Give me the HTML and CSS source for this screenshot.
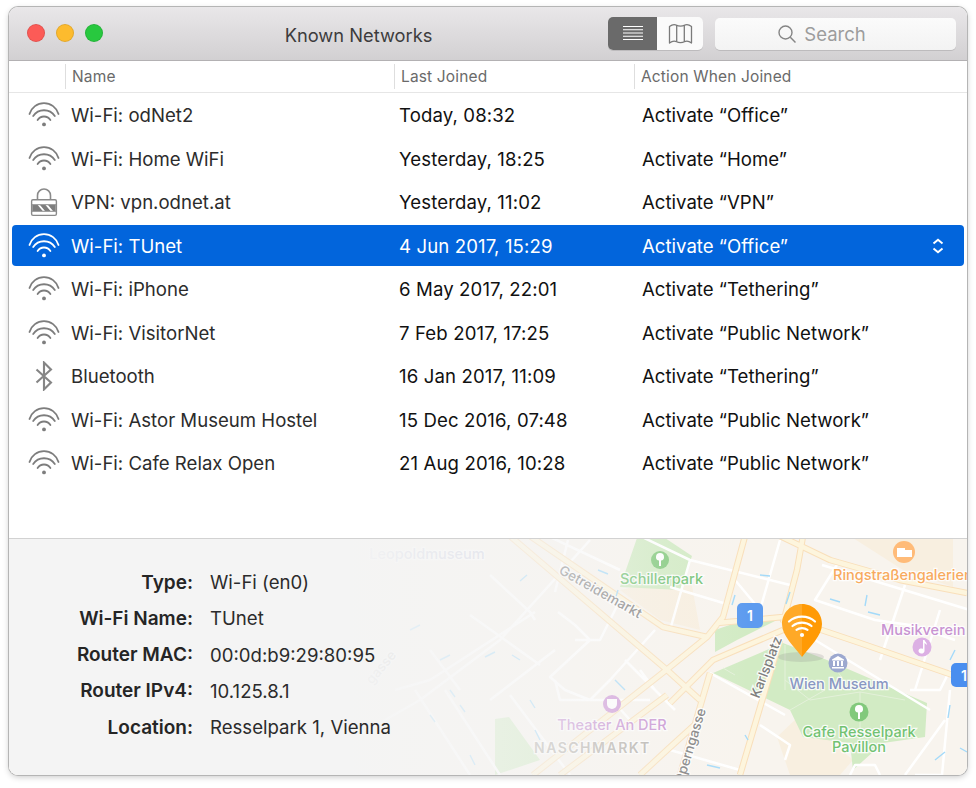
FILE: index.html
```html
<!DOCTYPE html>
<html lang="en">
<head>
<meta charset="utf-8">
<title>Known Networks</title>
<link rel="stylesheet" href="styles.css">
</head>
<body>
<svg class="sprites" width="0" height="0" aria-hidden="true">
  <defs>
    <symbol id="wifi" viewBox="0 0 32 26">
      <g fill="none" stroke="currentColor" stroke-width="1.800" stroke-linecap="round">
        <path d="M1.500 12A15.100 15.100 0 0 1 30.500 12"/>
        <path d="M5.200 14A13 13 0 0 1 26.800 14"/>
        <path d="M9.600 18A7.600 7.600 0 0 1 22.400 18"/>
      </g>
      <circle cx="16" cy="22.400" r="1.900" fill="currentColor"/>
    </symbol>
    <symbol id="vpn" viewBox="0 0 32 30">
      <path d="M9.500 13V8.500a6.500 6.500 0 0 1 13 0V13" fill="none" stroke="#8a8a8a" stroke-width="1.600"/>
      <rect x="3.600" y="12.800" width="24.800" height="15.600" rx="1.400" fill="#fff" stroke="#8a8a8a" stroke-width="1.400"/>
      <path d="M4.300 18h5.400l5 6H4.300zM12 18h5.500l5 6H17zM20 18h7.700v6h-2.700z" fill="#7d7d7d"/>
      <path d="M4 17.700h24M4 24.300h24" stroke="#8a8a8a" stroke-width="1"/>
    </symbol>
    <symbol id="bluetooth" viewBox="0 0 20 28">
      <path d="M3 8l13.500 12L10 26.500V1.500L16.500 8 3 20" fill="none" stroke="#858585" stroke-width="2"/>
    </symbol>
  </defs>
</svg>
<main class="window">
  <header class="toolbar">
    <div class="lights">
      <span class="light light-red"></span>
      <span class="light light-yellow"></span>
      <span class="light light-green"></span>
    </div>
    <h1 class="title">Known Networks</h1>
    <div class="segments">
      <span class="segment segment-on">
        <svg width="22" height="16" viewBox="0 0 22 16"><path d="M1 1.500h20M1 4.750h20M1 8h20M1 11.250h20M1 14.500h20" stroke="#fff" stroke-width="1.100"/></svg>
      </span>
      <span class="segment">
        <svg width="25" height="23" viewBox="0 0 25 23"><path d="M1.500 4.500C4 2.500 6.500 2 8.700 3.300 10.500 4.400 14.500 4.400 16.300 3.300 18.500 2 21 2.500 23.500 4.500V21C21 19 18.500 18.500 16.300 19.800 14.500 20.900 10.500 20.900 8.700 19.800 6.500 18.500 4 19 1.500 21ZM8.700 3.300V19.800M16.300 3.300V19.800" fill="none" stroke="#7a7a7a" stroke-width="1.300" stroke-linejoin="round"/></svg>
      </span>
    </div>
    <div class="search">
      <svg width="20" height="20" viewBox="0 0 20 20"><circle cx="8.500" cy="8.500" r="6.500" fill="none" stroke="#858585" stroke-width="1.400"/><path d="M13.300 13.300L18.500 18.500" stroke="#858585" stroke-width="1.500"/></svg>
      <span>Search</span>
    </div>
  </header>

  <section class="list">
    <div class="list-head">
      <span class="head-cell"></span>
      <span class="head-cell">Name</span>
      <span class="head-cell">Last Joined</span>
      <span class="head-cell">Action When Joined</span>
    </div>
    <div class="row">
      <svg class="icon"><use href="#wifi"/></svg>
      <span>Wi-Fi: odNet2</span><span>Today, 08:32</span><span>Activate “Office”</span>
    </div>
    <div class="row">
      <svg class="icon"><use href="#wifi"/></svg>
      <span>Wi-Fi: Home WiFi</span><span>Yesterday, 18:25</span><span>Activate “Home”</span>
    </div>
    <div class="row">
      <svg class="icon icon-tall"><use href="#vpn"/></svg>
      <span>VPN: vpn.odnet.at</span><span>Yesterday, 11:02</span><span>Activate “VPN”</span>
    </div>
    <div class="row row-selected">
      <svg class="icon"><use href="#wifi"/></svg>
      <span>Wi-Fi: TUnet</span><span>4 Jun 2017, 15:29</span><span>Activate “Office”</span>
      <svg class="stepper" width="12" height="16" viewBox="0 0 12 16"><path d="M1.500 5.500L6 1.800 10.500 5.500M1.500 10.500L6 14.200 10.500 10.500" fill="none" stroke="#fff" stroke-width="2"/></svg>
    </div>
    <div class="row">
      <svg class="icon"><use href="#wifi"/></svg>
      <span>Wi-Fi: iPhone</span><span>6 May 2017, 22:01</span><span>Activate “Tethering”</span>
    </div>
    <div class="row">
      <svg class="icon"><use href="#wifi"/></svg>
      <span>Wi-Fi: VisitorNet</span><span>7 Feb 2017, 17:25</span><span>Activate “Public Network”</span>
    </div>
    <div class="row">
      <svg class="icon icon-tall"><use href="#bluetooth"/></svg>
      <span>Bluetooth</span><span>16 Jan 2017, 11:09</span><span>Activate “Tethering”</span>
    </div>
    <div class="row">
      <svg class="icon"><use href="#wifi"/></svg>
      <span>Wi-Fi: Astor Museum Hostel</span><span>15 Dec 2016, 07:48</span><span>Activate “Public Network”</span>
    </div>
    <div class="row">
      <svg class="icon"><use href="#wifi"/></svg>
      <span>Wi-Fi: Cafe Relax Open</span><span>21 Aug 2016, 10:28</span><span>Activate “Public Network”</span>
    </div>
  </section>

  <section class="detail">
    <svg class="map" viewBox="9 538 958 237" width="958" height="237">
      <defs>
        <path id="majors" d="M510 536L667 670 700 700M530 536L663 627 707 637M745 536L723 617 707 637 670 667 533 775M803 536L797 570 783 623M717 623L783 617 860 643 967 680M670 703L713 660 783 630M710 673L680 775M780 640L740 775M780 536L830 560 900 580 967 593M640 775L667 750 700 720M560 775L667 695"/>
        <path id="minors" d="M640 536L690 560 790 585M670 587L730 605M840 560L815 600 875 620 910 625 955 640M822 565L970 610M905 585L880 660M940 610L915 690M910 690L940 690 950 670M950 690L942 775 915 775M780 540L760 610M760 610L735 580M760 725L790 745 785 760M710 673L785 715M815 640L930 710M905 775L945 720M850 775L855 765 875 765 880 775M670 750L740 770M690 560L670 630M620 600L600 640 575 640M568 540L555 592M590 540L500 640 420 700 350 740M550 537L620 570M490 575L530 612 535 620M535 612L430 680 395 690M470 615L540 665M430 650L460 690M555 650L490 700M555 680L560 700 650 700M558 612L575 625 590 640 550 677 565 690 590 700 610 680 655 630M625 660L675 710M612 700L630 720M655 690L640 670M510 695L570 775M415 690L470 775M445 690L500 775"/>
      </defs>
      <rect x="9" y="538" width="958" height="237" class="m-ground"/>
      <path class="m-tan" d="M853 538H953V587L903 570ZM620 590L690 575 700 630 660 620ZM777 737L800 715 853 760 840 775H790Z"/>
      <path class="m-green" d="M713 673L783 643 827 660 927 703 925 737 883 743 853 770 850 743 803 737 790 710ZM715 630L750 618 777 620 737 640 715 652ZM637 538H665L692 556 680 590 620 587ZM495 719L509 717 540 760 495 775Z"/>
      <path class="m-park-path" d="M723 668L735 675M785 645L785 690M785 680L810 700 860 692 905 700M860 692V740M830 660L850 690M790 710L825 690"/>
      <use href="#minors" class="m-minor"/>
      <use href="#majors" class="m-major-edge"/>
      <use href="#majors" class="m-major"/>
      <path class="m-arrow" d="M598 570L608 574M615 600L618 590M760 575L770 576M786 604L790 592M732 605L735 595M830 599L840 602M868 612L880 615M867 595L865 606M950 660L955 650M948 718L950 705M935 760L945 752M748 740L745 735M707 765L720 768M960 748L967 752M520 581L527 575M410 630L420 625M440 660L450 655M485 657L495 652M512 655L520 660M450 690L455 697M530 700L535 708M460 705L465 712M615 680L625 690M535 730L540 740M470 755L475 765M430 715L435 722"/>

      <text class="m-label m-faint" x="427" y="559" text-anchor="middle">Leopoldmuseum</text>
      <text class="m-road" transform="translate(558 573) rotate(29.500)">Getreidemarkt</text>
      <text class="m-label m-green-text" x="620" y="584">Schillerpark</text>
      <text class="m-label m-orange" x="833" y="580">Ringstraßengalerien</text>
      <text class="m-label m-purple" x="881" y="635">Musikverein</text>
      <text class="m-label m-blue" x="839" y="689" text-anchor="middle">Wien Museum</text>
      <text class="m-label m-green-text" x="859" y="737" text-anchor="middle">Cafe Resselpark</text>
      <text class="m-label m-green-text" x="859" y="752" text-anchor="middle">Pavillon</text>
      <text class="m-road" transform="translate(759 699) rotate(-69)">Karlsplatz</text>
      <text class="m-road" transform="translate(683 785) rotate(-73)">Operngasse</text>
      <text class="m-road m-faint-road" transform="translate(372 685) rotate(-50)">gasse</text>
      <text class="m-label m-pink" x="612" y="730" text-anchor="middle">Theater An DER</text>
      <text class="m-district" x="534" y="753">NASCHMARKT</text>

      <circle cx="660" cy="560" r="9" class="c-green"/>
      <path class="m-white" d="M660 553a4 4 0 0 1 4 4 3 3 0 0 1-3 3.500V566h-2v-5.500a3 3 0 0 1-3-3.500 4 4 0 0 1 4-4z"/>
      <circle cx="859" cy="712" r="9.500" class="c-green"/>
      <path class="m-white" d="M859 705a4 4 0 0 1 4 4 3 3 0 0 1-3 3.500V719h-2v-6.500a3 3 0 0 1-3-3.500 4 4 0 0 1 4-4z"/>
      <circle cx="904" cy="552" r="11" class="c-orange"/>
      <path class="m-white" d="M897 548h8v9h-8zM905 550h7v7h-7z"/>
      <circle cx="922" cy="647" r="9.500" class="c-purple"/>
      <path class="m-white" d="M923 640h1.500c.5 2 2.500 2.500 2.500 5l-2.500-2V651a3 2.500 0 1 1-1.500-2.200z"/>
      <circle cx="838" cy="663" r="9.500" class="c-blue"/>
      <path class="m-white" d="M838 656l6 3.500v1h-12v-1zM833 661h2v5h-2zM837 661h2v5h-2zM841 661h2v5h-2zM832 667h12v1.500h-12z"/>
      <circle cx="612" cy="704" r="9" class="c-pink"/>
      <path class="m-white" d="M607 699h10v5a5 5 0 0 1-10 0z"/>

      <rect x="737" y="603" width="26" height="25" rx="5" class="m-shield"/>
      <text class="m-shield-text" x="750" y="621" text-anchor="middle">1</text>
      <rect x="951" y="663" width="26" height="24" rx="5" class="m-shield m-shield-strong"/>
      <text class="m-shield-text" x="964" y="681" text-anchor="middle">1</text>
    </svg>
    <div class="fade"></div>
    <svg class="pin" width="70" height="64" viewBox="0 0 70 64">
      <ellipse cx="34" cy="54" rx="23" ry="5" fill="#8a8a8a" fill-opacity=".22"/>
      <path d="M35 1C23.500 1 15 10 15 21c0 12 12 22 20 33z" fill="#ffa927"/>
      <path d="M35 1c11.500 0 20 9 20 20 0 12-12 22-20 33z" fill="#ff9a05"/>
      <g fill="none" stroke="#fff" stroke-width="2.200" stroke-linecap="round">
        <path d="M22 18.500C29 12 41 12 48 18.500"/>
        <path d="M25.500 23C31 18.500 39 18.500 44.500 23"/>
        <path d="M29.500 26.800C32.500 24.500 37.500 24.500 40.500 26.800"/>
      </g>
      <circle cx="35" cy="32" r="2.100" fill="#fff"/>
    </svg>
    <dl class="facts">
      <dt>Type:</dt><dd>Wi-Fi (en0)</dd>
      <dt>Wi-Fi Name:</dt><dd>TUnet</dd>
      <dt>Router MAC:</dt><dd>00:0d:b9:29:80:95</dd>
      <dt>Router IPv4:</dt><dd>10.125.8.1</dd>
      <dt>Location:</dt><dd>Resselpark 1, Vienna</dd>
    </dl>
  </section>
</main>
</body>
</html>
```

FILE: styles.css
```css
* { box-sizing: border-box; }

html, body { height: 100%; }

body {
  margin: 0;
  padding: 7px 9px 13px;
  background: #fff;
  font-family: Inter, "Liberation Sans", sans-serif;
  color: #1d1d1d;
}

.sprites { position: absolute; }

.window {
  width: 958px;
  height: 768px;
  display: flex;
  flex-direction: column;
  border-radius: 9px;
  overflow: hidden;
  background: #fff;
  box-shadow: 0 0 0 1px #b5b5b5, 0 2px 6px rgba(0, 0, 0, .22);
}

.toolbar {
  flex: 0 0 54px;
  display: flex;
  align-items: center;
  padding: 0 11px 0 18px;
  background: linear-gradient(#e9e7e9, #d2d0d2);
  border-bottom: 1px solid #b3b1b3;
}

.lights { display: flex; gap: 11px; margin-top: -1px; }

.light { width: 18px; height: 18px; border-radius: 50%; border: 1px solid rgba(0, 0, 0, .1); }
.light-red { background: #fc5b57; }
.light-yellow { background: #fdbb2e; }
.light-green { background: #28c83f; }

.title {
  flex: 1;
  margin: 3px 0 0;
  font-size: 18.300px;
  font-weight: 400;
  text-align: center;
  color: #3d3c3d;
  padding-left: 6px;
}

.segments {
  display: flex;
  width: 95px;
  height: 33px;
  margin-top: -1px;
  border-radius: 5px;
  overflow: hidden;
  background: #fafafa;
  box-shadow: 0 1px 0 #bdbbbd;
}

.segment { flex: 1; display: flex; align-items: center; justify-content: center; }

.segment-on { flex: 0 0 49px; background: #6a6a6a; }

.search {
  width: 241px;
  height: 32px;
  margin-left: 12px;
  border-radius: 5px;
  display: flex;
  align-items: center;
  justify-content: center;
  gap: 7px;
  padding-right: 28px;
  background: linear-gradient(#fbfbfb, #f3f3f3);
  box-shadow: 0 1px 0 #bdbbbd;
  color: #9c9c9c;
  font-size: 18.500px;
}

.list { flex: 1; min-height: 0; }

.list-head {
  display: grid;
  grid-template-columns: 56px 329px 240px 1fr;
  height: 32px;
  margin-bottom: 1.250px;
  align-items: center;
  border-bottom: 1px solid #e6e6e6;
  font-size: 15.500px;
  letter-spacing: .15px;
  color: #6a6a6a;
}

.head-cell { height: 25px; padding-left: 6px; line-height: 25px; border-left: 1px solid #dedede; }
.head-cell:first-child { border-left: 0; }

.row {
  display: grid;
  grid-template-columns: 59px 328px 243px 1fr auto;
  align-items: center;
  height: 41.500px;
  margin: 0 3px 2px;
  padding-right: 20px;
  border-radius: 4px;
  font-size: 18.600px;
  color: #111;
}

.row span:nth-of-type(1) { color: #2c2c2c; }
.row span:nth-of-type(2) { letter-spacing: .12px; }

.row-selected { background: #0265dc; color: #fff; }
.row-selected span:nth-of-type(1) { color: #fff; }

.row .icon { width: 32px; height: 26px; margin-left: 16px; color: #7d7d7d; }
.row-selected .icon { color: #fff; }
.row .icon-tall { height: 30px; }

.detail {
  position: relative;
  flex: 0 0 237px;
  border-top: 1px solid #d2d2d2;
  background: #f4f4f4;
  overflow: hidden;
}

.map { position: absolute; left: 0; top: -1px; display: block; }

.fade {
  position: absolute;
  inset: 0;
  background: linear-gradient(90deg, #f4f4f4 0, #f4f4f4 340px, rgba(244, 244, 244, .8) 400px, rgba(244, 244, 244, .55) 550px, rgba(244, 244, 244, .18) 660px, rgba(244, 244, 244, 0) 740px);
}

.pin { position: absolute; left: 758px; top: 64px; }

.facts {
  position: relative;
  margin: 0;
  padding-top: 25px;
  display: grid;
  grid-template-columns: 184px 1fr;
  grid-auto-rows: 36.250px;
  column-gap: 17px;
  align-items: center;
  font-size: 18.600px;
}

.facts dt { text-align: right; font-size: 19px; font-weight: 600; color: #252525; }
.facts dd { margin: 0; color: #2b2b2b; }

.m-ground { fill: #f8f4ee; }
.m-tan { fill: #f8efe0; }
.m-green { fill: #d2ebc4; }
.m-park-path { fill: none; stroke: #e4f1da; stroke-width: 1; }
.m-minor { fill: none; stroke: #fff; stroke-width: 2.500; stroke-linejoin: round; }
.m-major-edge { fill: none; stroke: #f9dfba; stroke-width: 6.500; stroke-linejoin: round; }
.m-major { fill: none; stroke: #fdf5dd; stroke-width: 4.500; stroke-linejoin: round; }
.m-arrow { fill: none; stroke: #a4daf9; stroke-width: 1.400; }
.m-white { fill: #fff; }

.m-label, .m-road, .m-district {
  paint-order: stroke;
  stroke: rgba(255, 255, 255, .85);
  stroke-width: 2.500px;
}

.m-label { font-size: 14.500px; font-weight: 500; }
.m-road { font-size: 13.500px; font-weight: 500; fill: #7f7f7f; }
.m-faint-road { fill: #bbb; }
.m-faint { fill: #c9cde0; }
.m-green-text { fill: #72c272; }
.m-orange { fill: #f8aa5e; }
.m-purple { fill: #c893d2; }
.m-blue { fill: #8997c3; }
.m-pink { fill: #c893d2; }
.m-district { font-size: 14px; font-weight: 600; letter-spacing: 1.500px; fill: #b5b1ab; }

.c-green { fill: #82c97c; }
.c-orange { fill: #ffbb78; }
.c-purple { fill: #dcb0e4; }
.c-blue { fill: #9ca8cf; }
.c-pink { fill: #cf9ad8; }

.m-shield { fill: #5d9bef; }
.m-shield-strong { fill: #4a8eef; }
.m-shield-text { font-size: 14px; font-weight: 600; fill: #fff; }
```
